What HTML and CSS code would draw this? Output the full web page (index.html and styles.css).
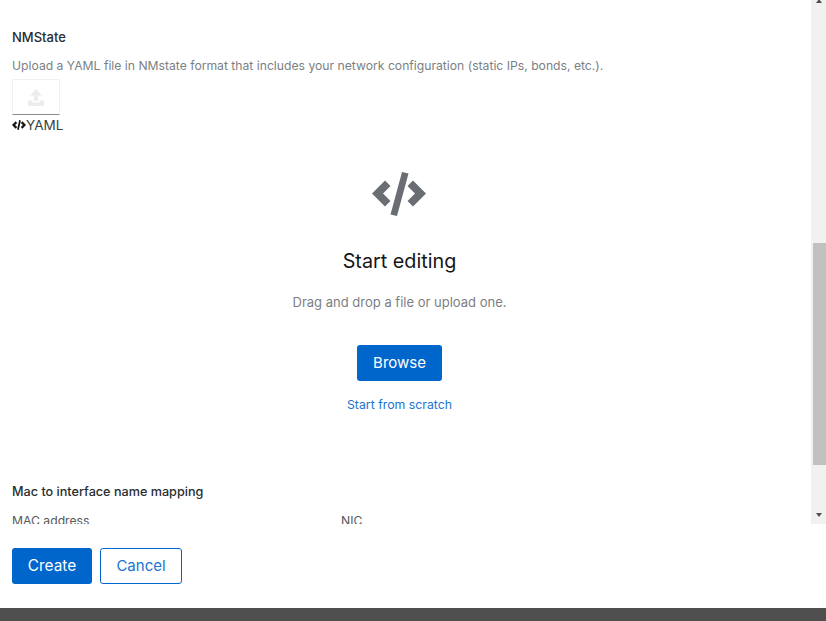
FILE: index.html
```html
<!DOCTYPE html>
<html lang="en">
<head>
<meta charset="utf-8">
<title>NMState</title>
<link rel="stylesheet" href="styles.css">
</head>
<body>
<div class="panel">
  <div class="scroller">
    <main class="content">
      <h2 class="label first">NMState</h2>
      <p class="help">Upload a YAML file in NMstate format that includes your network configuration (static IPs, bonds, etc.).</p>
      <div class="upload-btn">
        <svg class="upload-icon" viewBox="0 0 16 17" width="16" height="17"><path fill="#ececec" d="M8 0 14 6.500H10.200V12H5.800V6.500H2zM0 11.500H4.300V13.500H11.700V11.500H16V17H0z"/></svg>
      </div>
      <div class="lang">
        <svg class="lang-icon" viewBox="0 0 14 10" width="14" height="10"><path fill="#151515" d="M3.600 1.300 5.200 2.900 3.100 5l2.100 2.100L3.600 8.700 0 5zM10.400 1.300 8.800 2.900 10.900 5 8.800 7.100 10.400 8.700 14 5zM7.200 0 8.900.4 6.800 10 5.100 9.600z"/></svg>
        <span>YAML</span>
      </div>
      <section class="empty">
        <svg class="empty-icon" viewBox="0 0 54 44" width="54" height="44"><path fill="#6a6e73" d="M13 8.500 18.500 14 11 21.500 18.500 29 13 34.500 0 21.500zM41 8.500 35.500 14 43 21.500 35.500 29 41 34.500 54 21.500zM30 0 36.500 1.500 25 44 18.500 42.500z"/></svg>
        <h1 class="empty-title">Start editing</h1>
        <p class="empty-text">Drag and drop a file or upload one.</p>
        <button class="btn primary browse">Browse</button>
        <a class="link">Start from scratch</a>
      </section>
      <h2 class="label mapping">Mac to interface name mapping</h2>
      <div class="mapping-cols">
        <span>MAC address</span>
        <span>NIC</span>
      </div>
    </main>
    <div class="scrollbar">
      <span class="arrow up"></span>
      <div class="thumb"></div>
      <span class="arrow down"></span>
    </div>
  </div>
  <footer class="actions">
    <button class="btn primary">Create</button>
    <button class="btn secondary">Cancel</button>
  </footer>
  <div class="bottom-bar"></div>
</div>
</body>
</html>
```
FILE: styles.css
```css
* { box-sizing: border-box; }
html, body { margin: 0; height: 100%; overflow: hidden; }
body { background: #fff; color: #151515; font-family: "Inter", "Liberation Sans", sans-serif; }
.panel { height: 621px; display: flex; flex-direction: column; }
.scroller { height: 524px; display: flex; overflow: hidden; }
.content { flex: 1; min-width: 0; padding: 0 24px 0 12px; overflow: hidden; }
.label { margin: 0; font-size: 12.650px; font-weight: 500; line-height: 18px; color: #2a2d30; }
.label.first { padding-top: 28px; height: 46px; font-size: 13px; }
.help { margin: 11px 0 0; font-size: 12.180px; line-height: 18px; color: #7b7f84; white-space: nowrap; }
.upload-btn { width: 48px; height: 36px; margin-top: 4px; display: flex; align-items: center; justify-content: center; border: 1px solid #f0f0f0; border-bottom-color: #8a8d90; }
.lang { display: flex; align-items: center; height: 20px; font-size: 13.500px; }
.lang span { color: #3c3f42; }
.empty { height: 348px; display: flex; flex-direction: column; align-items: center; padding-top: 37px; }
.empty-icon { flex: none; margin-right: 2px; }
.empty-title { margin: 30px 0 0; font-size: 19.800px; font-weight: 400; line-height: 30px; color: #151515; }
.empty-text { margin: 16px 0 0; font-size: 13px; line-height: 20px; color: #7b7f84; }
.btn { font: inherit; font-size: 15px; line-height: 22px; height: 36px; border-radius: 3px; border: 1px solid transparent; padding: 0 16px; }
.primary { background: #06c; color: #fff; }
.secondary { background: #fff; color: #1b74d0; border-color: #06c; }
.browse { margin-top: 33px; width: 85px; padding: 0; }
.link { margin-top: 15px; font-size: 12.300px; line-height: 18px; color: #1b74d0; }
.mapping-cols { display: grid; grid-template-columns: 329px 1fr; margin-top: 11px; font-size: 12.200px; line-height: 18px; color: #55585c; }
.scrollbar { width: 15px; flex: none; padding-left: 2px; background: #f1f1f1; display: flex; flex-direction: column; position: relative; }
.thumb { height: 222px; margin-top: 243px; background: #c1c1c1; }
.arrow { position: absolute; left: 5px; width: 0; height: 0; border-left: 3.500px solid transparent; border-right: 3.500px solid transparent; }
.arrow.up { top: -1px; border-bottom: 4px solid #505050; }
.arrow.down { bottom: 7px; border-top: 4px solid #505050; }
.actions { height: 84px; display: flex; gap: 8px; padding: 24px 12px; }
.actions .btn { width: 80px; padding: 0; }
.actions .primary { font-size: 15.400px; }
.actions .secondary { width: 82px; }
.bottom-bar { height: 13px; background: #4f4f4f; }
```
